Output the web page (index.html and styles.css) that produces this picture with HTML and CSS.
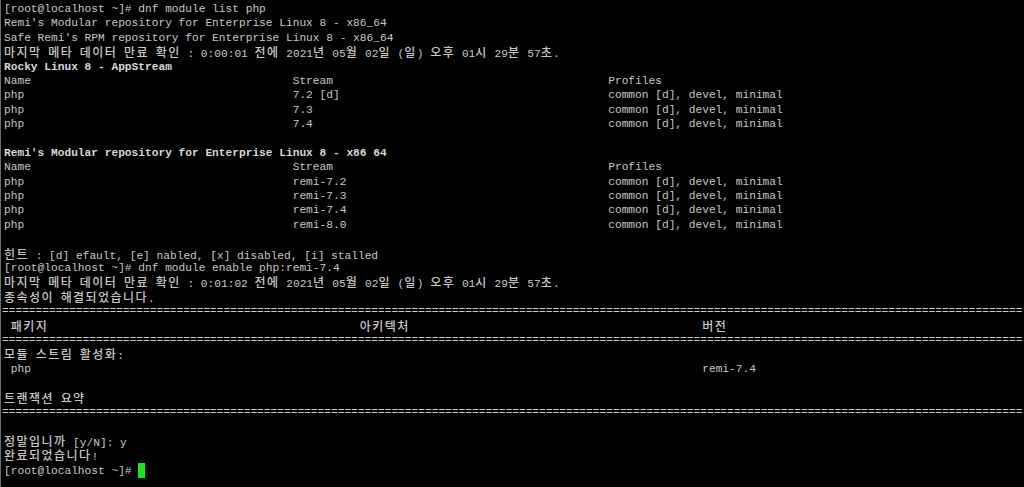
FILE: index.html
```html
<!DOCTYPE html>
<html lang="ko">
<head>
<meta charset="utf-8">
<title>Terminal</title>
<link rel="stylesheet" href="styles.css">
</head>
<body>
<div class="term">
<div class="l">[root@localhost ~]# dnf module list php</div>
<div class="l">Remi's Modular repository for Enterprise Linux 8 - x86_64</div>
<div class="l">Safe Remi's RPM repository for Enterprise Linux 8 - x86_64</div>
<div class="l"><span class="k">마지막</span> <span class="k">메타</span> <span class="k">데이터</span> <span class="k">만료</span> <span class="k">확인</span> : 0:00:01 <span class="k">전에</span> 2021<span class="k">년</span> 05<span class="k">월</span> 02<span class="k">일</span> (<span class="k">일</span>) <span class="k">오후</span> 01<span class="k">시</span> 29<span class="k">분</span> 57<span class="k">초</span>.</div>
<div class="l b">Rocky Linux 8 - AppStream</div>
<div class="l"><span class="c1">Name</span><span class="c2">Stream</span>Profiles</div>
<div class="l"><span class="c1">php</span><span class="c2">7.2 [d]</span>common [d], devel, minimal</div>
<div class="l"><span class="c1">php</span><span class="c2">7.3</span>common [d], devel, minimal</div>
<div class="l"><span class="c1">php</span><span class="c2">7.4</span>common [d], devel, minimal</div>
<div class="l"></div>
<div class="l b">Remi's Modular repository for Enterprise Linux 8 - x86 64</div>
<div class="l"><span class="c1">Name</span><span class="c2">Stream</span>Profiles</div>
<div class="l"><span class="c1">php</span><span class="c2">remi-7.2</span>common [d], devel, minimal</div>
<div class="l"><span class="c1">php</span><span class="c2">remi-7.3</span>common [d], devel, minimal</div>
<div class="l"><span class="c1">php</span><span class="c2">remi-7.4</span>common [d], devel, minimal</div>
<div class="l"><span class="c1">php</span><span class="c2">remi-8.0</span>common [d], devel, minimal</div>
<div class="l"></div>
<div class="l"><span class="k">힌트</span> : [d] efault, [e] nabled, [x] disabled, [i] stalled</div>
<div class="l">[root@localhost ~]# dnf module enable php:remi-7.4</div>
<div class="l"><span class="k">마지막</span> <span class="k">메타</span> <span class="k">데이터</span> <span class="k">만료</span> <span class="k">확인</span> : 0:01:02 <span class="k">전에</span> 2021<span class="k">년</span> 05<span class="k">월</span> 02<span class="k">일</span> (<span class="k">일</span>) <span class="k">오후</span> 01<span class="k">시</span> 29<span class="k">분</span> 57<span class="k">초</span>.</div>
<div class="l"><span class="k">종속성이</span> <span class="k">해결되었습니다</span>.</div>
<div class="l sep">========================================================================================================================================================</div>
<div class="l"><span class="p1"> <span class="k">패키지</span></span><span class="p2"><span class="k">아키텍처</span></span><span class="k">버전</span></div>
<div class="l sep">========================================================================================================================================================</div>
<div class="l"><span class="k">모듈</span> <span class="k">스트림</span> <span class="k">활성화</span>:</div>
<div class="l"><span class="p3"> php</span>remi-7.4</div>
<div class="l"></div>
<div class="l"><span class="k">트랜잭션</span> <span class="k">요약</span></div>
<div class="l sep">========================================================================================================================================================</div>
<div class="l"></div>
<div class="l"><span class="k">정말입니까</span> [y/N]: y</div>
<div class="l"><span class="k">완료되었습니다</span>!</div>
<div class="l">[root@localhost ~]# <span class="cursor"></span></div>
</div>
</body>
</html>
```
FILE: styles.css
```css
html, body {
  margin: 0;
  padding: 0;
  background: #000;
  width: 1024px;
  height: 487px;
  overflow: hidden;
}

.term {
  box-sizing: border-box;
  height: 487px;
  padding: 2px 0 0 3px;
  border-left: 1px solid #6e6e6e;
  font-family: "Liberation Mono", "Noto Sans CJK KR", monospace;
  font-size: 11.2px;
  color: #c8c8c8;
}

.l {
  height: 14.4px;
  line-height: 14.4px;
  white-space: pre;
}

.b {
  font-weight: bold;
  color: #d8d8d8;
}

.k {
  font-family: "Noto Sans CJK KR", sans-serif;
  font-size: 12px;
  font-weight: 500;
  letter-spacing: 1.44px;
  line-height: 14.4px;
  color: #c8c8c8;
}

.c1 {
  display: inline-block;
  width: 43ch;
}

.c2 {
  display: inline-block;
  width: 47ch;
}

.p1 {
  display: inline-block;
  width: 53ch;
}

.p2 {
  display: inline-block;
  width: 51ch;
}

.p3 {
  display: inline-block;
  width: 104ch;
}

.sep {
  margin-left: -2px;
}

.cursor {
  display: inline-block;
  width: 7px;
  height: 15px;
  background: #12e812;
  vertical-align: -4px;
}
```
